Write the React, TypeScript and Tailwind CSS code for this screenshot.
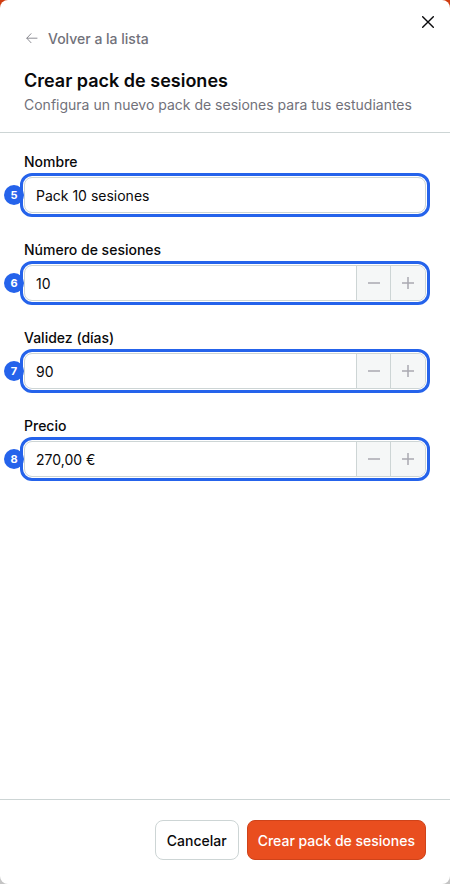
import React from "react";

type FieldProps = {
  id: string;
  step: number;
  label: string;
  value: string;
  stepper?: boolean;
};

const fields: FieldProps[] = [
  { id: "nombre", step: 5, label: "Nombre", value: "Pack 10 sesiones" },
  { id: "sesiones", step: 6, label: "Número de sesiones", value: "10", stepper: true },
  { id: "validez", step: 7, label: "Validez (días)", value: "90", stepper: true },
  { id: "precio", step: 8, label: "Precio", value: "270,00 €", stepper: true },
];

const Field = ({ id, step, label, value, stepper }: FieldProps) => {
  return (
    <div className="flex flex-col gap-0.5">
      <label htmlFor={id} className="text-sm/[26px] font-medium">
        {label}
      </label>
      <div className="relative rounded-lg outline-3 outline-offset-1 outline-[#2563eb]">
        <span className="absolute top-1/2 -left-5 flex size-5 -translate-y-1/2 items-center justify-center rounded-full bg-[#2563eb] text-[11px] font-bold text-white">
          {step}
        </span>
        <div className="relative flex h-9 overflow-hidden rounded-lg border border-[#cdd5d5] bg-white">
          <input
            id={id}
            type="text"
            defaultValue={value}
            className="min-w-0 flex-1 px-[11px] pt-0.5 text-sm outline-none"
          />
          {stepper && (
            <>
              <button
                type="button"
                aria-label={`Reducir ${label}`}
                className="flex w-[34px] items-center justify-center border-l border-[#cdd5d5] bg-[#f5f7f7] text-[#a9a9b1]"
              >
                <svg className="size-3" viewBox="0 0 12 12" stroke="currentColor" strokeWidth="1.5">
                  <path d="M0 6h12" />
                </svg>
              </button>
              <button
                type="button"
                aria-label={`Aumentar ${label}`}
                className="flex w-[35px] items-center justify-center border-l border-[#cdd5d5] bg-[#f5f7f7] text-[#a9a9b1]"
              >
                <svg className="size-3" viewBox="0 0 12 12" stroke="currentColor" strokeWidth="1.5">
                  <path d="M0 6h12M6 0v12" />
                </svg>
              </button>
            </>
          )}
        </div>
      </div>
    </div>
  );
};

const App = () => {
  return (
    <div className="flex min-h-screen flex-col bg-linear-to-b from-[#d03c10] from-50% to-[#c4c4c4] to-50% font-['Inter',sans-serif] text-[#09090b]">
      <form className="relative flex flex-1 flex-col rounded-lg bg-white">
        <button
          type="button"
          aria-label="Cerrar"
          className="absolute top-3 right-3 flex size-5 items-center justify-center"
        >
          <svg className="size-3" viewBox="0 0 12 12" fill="none" stroke="currentColor" strokeWidth="1.4" strokeLinecap="round">
            <path d="M.7.7l10.6 10.6M11.3.7L.7 11.3" />
          </svg>
        </button>

        <header className="flex flex-col border-b border-[#cdd5d5] px-6 pt-[27px] pb-[17px]">
          <a href="#" className="flex items-center gap-2 self-start text-sm/6 font-medium text-[#71717a]">
            <svg className="size-4" viewBox="0 0 16 16" fill="none" stroke="currentColor" strokeWidth="0.8" strokeLinecap="round" strokeLinejoin="round">
              <path d="M13 7.2H3M7 2.7L2.8 7.2 7 11.7" />
            </svg>
            Volver a la lista
          </a>
          <h1 className="mt-4 text-lg/7 font-semibold">Crear pack de sesiones</h1>
          <p className="text-sm/5 text-[#71717a]">
            Configura un nuevo pack de sesiones para tus estudiantes
          </p>
        </header>

        <div className="flex flex-1 flex-col gap-6 px-6 py-4">
          {fields.map((field) => (
            <Field key={field.id} {...field} />
          ))}
        </div>

        <footer className="flex justify-end gap-2 border-t border-[#cdd5d5] px-6 pt-5 pb-6">
          <button type="button" className="h-10 rounded-lg border border-[#cdd5d5] px-[11px] pt-0.5 text-sm font-medium">
            Cancelar
          </button>
          <button
            type="submit"
            className="h-10 rounded-lg border border-[#cf431a] bg-[#e94e1f] px-[10px] pt-0.5 text-sm font-medium text-white"
          >
            Crear pack de sesiones
          </button>
        </footer>
      </form>
    </div>
  );
};

export default App;
